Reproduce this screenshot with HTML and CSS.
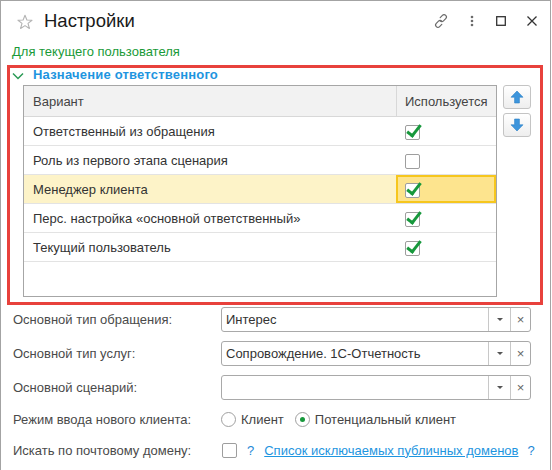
FILE: index.html
```html
<!DOCTYPE html>
<html lang="ru">
<head>
<meta charset="utf-8">
<link rel="stylesheet" href="styles.css">
</head>
<body>
<div class="window">
  <div class="titlebar">
    <svg class="star" width="16" height="16" viewBox="0 0 16 16"><path d="M8 1.2 L9.9 6 L15 6.2 L11 9.4 L12.4 14.5 L8 11.6 L3.6 14.5 L5 9.4 L1 6.2 L6.1 6 Z" fill="none" stroke="#b4b4b4" stroke-width="1.1" stroke-linejoin="round"/></svg>
    <div class="title">Настройки</div>
    <div class="tools">
      <svg class="ico" width="18" height="16" viewBox="0 0 18 16"><g fill="none" stroke="#6b6b6b" stroke-width="1.2" stroke-linecap="round"><path d="M8.2 4.6 L10.4 2.4 a2.3 2.3 0 0 1 3.3 3.3 L11.5 7.9 a2.3 2.3 0 0 1 -3.3 0"/><path d="M9.8 11.4 L7.6 13.6 a2.3 2.3 0 0 1 -3.3 -3.3 L6.5 8.1 a2.3 2.3 0 0 1 3.3 0"/></g></svg>
      <svg class="ico dots" width="6" height="16" viewBox="0 0 6 16"><circle cx="3" cy="4" r="1.3" fill="#6b6b6b"/><circle cx="3" cy="8" r="1.3" fill="#6b6b6b"/><circle cx="3" cy="12" r="1.3" fill="#6b6b6b"/></svg>
      <svg class="ico sq" width="12" height="16" viewBox="0 0 12 16"><rect x="1.7" y="3.7" width="8.6" height="8.6" fill="none" stroke="#333" stroke-width="1.3"/></svg>
      <svg class="ico cls" width="12" height="16" viewBox="0 0 12 16"><path d="M1.5 3.5 L10.5 12.5 M10.5 3.5 L1.5 12.5" stroke="#333" stroke-width="1.3"/></svg>
    </div>
  </div>
  <div class="subtitle">Для текущего пользователя</div>
  <div class="group">
    <div class="group-head">
      <svg class="chev" width="12" height="8" viewBox="0 0 12 8"><path d="M1 1.5 L6 6.5 L11 1.5" fill="none" stroke="#2a9a55" stroke-width="1.5"/></svg>
      <span>Назначение ответственного</span>
    </div>
    <div class="group-body">
      <div class="table">
        <div class="row head">
          <div class="c1">Вариант</div>
          <div class="c2">Используется</div>
        </div>
        <div class="row">
          <div class="c1">Ответственный из обращения</div>
          <div class="c2"><span class="cb checked"></span></div>
        </div>
        <div class="row">
          <div class="c1">Роль из первого этапа сценария</div>
          <div class="c2"><span class="cb"></span></div>
        </div>
        <div class="row sel">
          <div class="c1">Менеджер клиента</div>
          <div class="c2 cur"><span class="cb checked"></span></div>
        </div>
        <div class="row">
          <div class="c1">Перс. настройка «основной ответственный»</div>
          <div class="c2"><span class="cb checked"></span></div>
        </div>
        <div class="row">
          <div class="c1">Текущий пользователь</div>
          <div class="c2"><span class="cb checked"></span></div>
        </div>
      </div>
      <div class="side">
        <div class="btn"><svg width="14" height="14" viewBox="0 0 14 14"><path d="M7 1 L13 7.2 L9.4 7.2 L9.4 13 L4.6 13 L4.6 7.2 L1 7.2 Z" fill="#3d95dc" stroke="#2a7fc6" stroke-width="0.6"/></svg></div>
        <div class="btn"><svg width="14" height="14" viewBox="0 0 14 14"><path d="M7 13 L13 6.8 L9.4 6.8 L9.4 1 L4.6 1 L4.6 6.8 L1 6.8 Z" fill="#3d95dc" stroke="#2a7fc6" stroke-width="0.6"/></svg></div>
      </div>
    </div>
  </div>
  <div class="form">
    <div class="label">Основной тип обращения:</div>
    <div class="field"><div class="val">Интерес</div><div class="dd"><span class="tri"></span></div><div class="clr">×</div></div>
    <div class="label">Основной тип услуг:</div>
    <div class="field"><div class="val">Сопровождение. 1С-Отчетность</div><div class="dd"><span class="tri"></span></div><div class="clr">×</div></div>
    <div class="label">Основной сценарий:</div>
    <div class="field"><div class="val"></div><div class="dd"><span class="tri"></span></div><div class="clr">×</div></div>
    <div class="label">Режим ввода нового клиента:</div>
    <div class="radios">
      <span class="radio"></span><span class="rtext">Клиент</span>
      <span class="radio on"></span><span class="rtext">Потенциальный клиент</span>
    </div>
    <div class="label">Искать по почтовому домену:</div>
    <div class="checkline">
      <span class="cb"></span><span class="q q1">?</span><a class="link" href="#">Список исключаемых публичных доменов</a><span class="q q2">?</span>
    </div>
  </div>
</div>
</body>
</html>
```
FILE: styles.css
```css
* { box-sizing: border-box; }
html, body { margin: 0; padding: 0; background: #fff; }
body { font-family: "Liberation Sans", Arial, sans-serif; font-size: 13px; color: #333; }

.window {
  width: 551px;
  height: 480px;
  border: 1px solid #a3a3a3;
  background: #fff;
}

.titlebar {
  display: flex;
  align-items: center;
  height: 40px;
  padding-left: 16px;
}
.star { margin-top: 1px; }
.title { margin-left: 11px; font-size: 18.5px; color: #1a1a1a; }
.tools { margin-left: auto; display: flex; align-items: center; margin-right: 12px; }
.ico { display: block; }
.tools svg:first-child { margin-right: 19px; margin-left: -4px; }
.dots { margin-right: 20px; }
.sq { margin-right: 19px; }

.subtitle {
  color: #199a38;
  font-size: 13px;
  margin-left: 11px;
  margin-top: 3px;
  line-height: 16px;
}

.group {
  margin: 5px 0 0 6px;
  width: 536px;
  height: 240px;
  border: 3px solid #e8413c;
}
.group-head {
  display: flex;
  align-items: center;
  height: 14px;
  padding-left: 2px;
  line-height: 14px;
}
.chev { margin-right: 9px; margin-top: 1px; }
.group-head span { color: #1e95e0; font-weight: bold; font-size: 13px; letter-spacing: 0.2px; }

.group-body {
  display: flex;
  margin-left: 13px;
  margin-top: 3px;
}
.table {
  width: 474px;
  height: 212px;
  border: 1px solid #a6a6a6;
}
.row {
  display: flex;
  height: 29px;
  border-bottom: 1px solid #e3e3e3;
}
.row.head { height: 31px; background: #f2f2f2; border-bottom: 1px solid #d8d8d8; color: #444; }
.c1 { width: 372px; padding-left: 9px; display: flex; align-items: center; }
.c2 { flex: 1; display: flex; align-items: center; padding-left: 9px; }
.row.head .c2 { border-left: 1px solid #d8d8d8; padding-left: 8px; }
.row.sel { background: #fdf3c8; }
.c2.cur { background: #fde48e; border: 2px solid #f6c61d; padding-left: 7px; }

.cb {
  position: relative;
  display: inline-block;
  width: 15px;
  height: 15px;
  border: 1px solid #9e9e9e;
  border-radius: 2px;
  background: #fff;
  margin-top: 2px;
}
.cb.checked::after {
  content: "";
  position: absolute;
  left: 4px;
  top: -4px;
  width: 5px;
  height: 12px;
  border-right: 3px solid #17983c;
  border-bottom: 3px solid #17983c;
  transform: rotate(38deg);
}

.side { margin-left: 6px; display: flex; flex-direction: column; gap: 4px; }
.btn {
  width: 28px;
  height: 24px;
  border: 1px solid #c4c4c4;
  border-radius: 3px;
  background: linear-gradient(#ffffff, #eeeeee);
  display: flex;
  align-items: center;
  justify-content: center;
}

.form {
  display: grid;
  grid-template-columns: 208px 310px;
  grid-template-rows: 25px 25px 24px 22px 22px;
  row-gap: 9px;
  margin: 2px 0 0 12px;
  align-items: center;
}
.label { color: #4a4a4a; white-space: nowrap; }
.field {
  display: flex;
  height: 25px;
  border: 1px solid #a9a9a9;
  border-radius: 3px;
  background: #fff;
}
.val { flex: 1; padding-left: 4px; display: flex; align-items: center; color: #333; }
.dd { width: 22px; border-left: 1px solid #c8c8c8; display: flex; align-items: center; justify-content: center; }
.tri { width: 0; height: 0; border-left: 3px solid transparent; border-right: 3px solid transparent; border-top: 3px solid #555; }
.clr { width: 20px; border-left: 1px solid #c8c8c8; display: flex; align-items: center; justify-content: center; color: #666; font-size: 13px; }

.radios { display: flex; align-items: center; }
.radio {
  width: 15px; height: 15px; border: 1px solid #a0a0a0; border-radius: 50%;
  display: inline-flex; align-items: center; justify-content: center; background: #fff;
}
.radio.on::after { content: ""; width: 5px; height: 5px; border-radius: 50%; background: #17983c; }
.rtext { margin-left: 5px; margin-right: 11px; color: #444; }

.checkline { display: flex; align-items: center; white-space: nowrap; }
.checkline .cb { margin-top: 0; margin-left: 1px; flex: none; }
.q { color: #1e88d6; font-size: 13px; flex: none; }
.q1 { margin: 0 10px 0 10px; }
.q2 { margin-left: 9px; }
.link { color: #1e95e0; text-decoration: underline; flex: none; }
```
